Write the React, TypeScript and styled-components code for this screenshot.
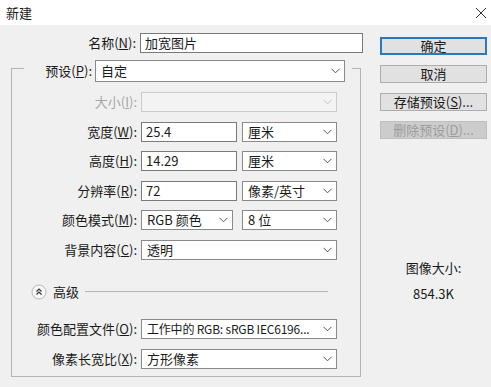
import React from "react"
import styled, { createGlobalStyle } from "styled-components"

const GlobalStyle = createGlobalStyle`
  html, body {
    margin: 0;
    padding: 0;
    background: #f0f0f0;
  }
  body {
    font-family: "Noto Sans CJK SC", "Microsoft YaHei", sans-serif;
    font-size: 13px;
    color: #1a1a1a;
  }
`

const Window = styled.div`
  width: 491px;
  height: 387px;
  background: #f0f0f0;
  display: flex;
  flex-direction: column;
  overflow: hidden;
`

const TitleBar = styled.div`
  height: 25px;
  flex: none;
  background: #fff;
  display: flex;
  align-items: center;
  justify-content: space-between;
  padding: 0 4px 0 6px;
  box-sizing: border-box;
  line-height: 25px;
`

const Body = styled.div`
  display: flex;
  flex: 1;
`

const Main = styled.div`
  width: 364px;
  display: flex;
  flex-direction: column;
  padding-top: 8px;
`

const Row = styled.div<{ $top?: number }>`
  display: flex;
  align-items: center;
  height: 20px;
  margin-top: ${({ $top }) => $top ?? 0}px;
`

const Label = styled.div<{ $w: number; $disabled?: boolean }>`
  width: ${({ $w }) => $w}px;
  margin-right: 4px;
  text-align: right;
  white-space: nowrap;
  line-height: 20px;
  color: ${({ $disabled }) => ($disabled ? "#a6a6a6" : "#1a1a1a")};
`

const Field = styled.div<{ $w: number }>`
  width: ${({ $w }) => $w}px;
  height: 20px;
  box-sizing: border-box;
  border: 1px solid #7a7a7a;
  background: #fff;
  padding: 0 4px;
  line-height: 18px;
  white-space: nowrap;
`

const Select = styled.div<{ $w: number; $h?: number; $disabled?: boolean; $gap?: number }>`
  width: ${({ $w }) => $w}px;
  height: ${({ $h }) => $h ?? 20}px;
  margin-left: ${({ $gap }) => $gap ?? 0}px;
  box-sizing: border-box;
  border: 1px solid ${({ $disabled }) => ($disabled ? "#cccccc" : "#8a8a8a")};
  background: ${({ $disabled }) => ($disabled ? "#f3f3f3" : "#fff")};
  display: flex;
  align-items: center;
  justify-content: space-between;
  gap: 4px;
  padding: 0 4px 0 5px;
  white-space: nowrap;
  overflow: hidden;
  color: #1a1a1a;
`

const SelectText = styled.span<{ $tight?: boolean }>`
  overflow: hidden;
  line-height: 18px;
  font-size: ${({ $tight }) => ($tight ? "12px" : "inherit")};
  letter-spacing: ${({ $tight }) => ($tight ? "-0.2px" : "normal")};
`

const Group = styled.fieldset`
  margin: 1px 0 0 11px;
  width: 350px;
  box-sizing: border-box;
  border: 1px solid #b4b4b4;
  padding: 10px 0 7px 0;
  min-width: 0;
`

const Legend = styled.legend`
  margin-left: 12px;
  padding: 6px 7px 0 0;
  display: flex;
  align-items: center;
`

const Advanced = styled.div`
  display: flex;
  align-items: center;
  height: 20px;
  margin: 22px 32px 0 19px;
`

const AdvancedText = styled.span`
  margin: 0 6px 0 6px;
  line-height: 20px;
`

const Rule = styled.div`
  flex: 1;
  height: 1px;
  background: #b4b4b4;
`

const Side = styled.div`
  width: 107px;
  margin-left: 16px;
  padding-top: 12px;
  display: flex;
  flex-direction: column;
`

const Button = styled.div<{ $primary?: boolean; $disabled?: boolean }>`
  height: 18px;
  box-sizing: border-box;
  margin-bottom: 10px;
  background: ${({ $disabled }) => ($disabled ? "#cccccc" : "#e1e1e1")};
  border: ${({ $primary, $disabled }) =>
    $primary ? "2px solid #2f78b8" : $disabled ? "1px solid #bfbfbf" : "1px solid #adadad"};
  color: ${({ $disabled }) => ($disabled ? "#9c9c9c" : "#1a1a1a")};
  display: flex;
  align-items: center;
  justify-content: center;
  line-height: 16px;
  white-space: nowrap;
`

const SizeInfo = styled.div`
  margin-top: 110px;
  display: flex;
  flex-direction: column;
  align-items: center;
  gap: 8px;
  line-height: 18px;
`

const Chevron: React.FC<{ muted?: boolean }> = ({ muted }) => (
  <svg width="9" height="6" viewBox="0 0 9 6" style={{ flex: "none" }}>
    <polyline points="0.5,0.8 4.5,4.8 8.5,0.8" fill="none" stroke={muted ? "#c4c4c4" : "#555"} strokeWidth="1" />
  </svg>
)

const CloseIcon = () => (
  <svg width="12" height="12" viewBox="0 0 12 12">
    <path d="M1 1 L11 11 M11 1 L1 11" stroke="#333" strokeWidth="1" />
  </svg>
)

const CollapseIcon = () => (
  <svg width="16" height="16" viewBox="0 0 16 16">
    <circle cx="8" cy="8" r="7" fill="#f7f7f7" stroke="#b8b8b8" />
    <polyline points="5.5,7.5 8,5 10.5,7.5" fill="none" stroke="#333" strokeWidth="1.2" />
    <polyline points="5.5,10.5 8,8 10.5,10.5" fill="none" stroke="#333" strokeWidth="1.2" />
  </svg>
)

const Key: React.FC<{ k: string }> = ({ k }) => (
  <>
    (<u>{k}</u>)
  </>
)

export default function App() {
  return (
    <Window>
      <GlobalStyle />
      <TitleBar>
        <span>新建</span>
        <CloseIcon />
      </TitleBar>
      <Body>
        <Main>
          <Row>
            <Label $w={136}>
              名称<Key k="N" />:
            </Label>
            <Field $w={223}>加宽图片</Field>
          </Row>

          <Group>
            <Legend>
              <Label $w={68} style={{ marginRight: 3 }}>
                预设<Key k="P" />:
              </Label>
              <Select $w={250} $h={22}>
                <SelectText>自定</SelectText>
                <Chevron />
              </Select>
            </Legend>

            <Row>
              <Label $w={125} $disabled>
                大小<Key k="I" />:
              </Label>
              <Select $w={196} $disabled>
                <SelectText />
                <Chevron muted />
              </Select>
            </Row>
            <Row $top={9.6}>
              <Label $w={125}>
                宽度<Key k="W" />:
              </Label>
              <Field $w={96}>25.4</Field>
              <Select $w={95} $gap={5}>
                <SelectText>厘米</SelectText>
                <Chevron />
              </Select>
            </Row>
            <Row $top={9.6}>
              <Label $w={125}>
                高度<Key k="H" />:
              </Label>
              <Field $w={96}>14.29</Field>
              <Select $w={95} $gap={5}>
                <SelectText>厘米</SelectText>
                <Chevron />
              </Select>
            </Row>
            <Row $top={9.6}>
              <Label $w={125}>
                分辨率<Key k="R" />:
              </Label>
              <Field $w={96}>72</Field>
              <Select $w={95} $gap={5}>
                <SelectText>像素/英寸</SelectText>
                <Chevron />
              </Select>
            </Row>
            <Row $top={9.6}>
              <Label $w={125}>
                颜色模式<Key k="M" />:
              </Label>
              <Select $w={92}>
                <SelectText>RGB 颜色</SelectText>
                <Chevron />
              </Select>
              <Select $w={95} $gap={9}>
                <SelectText>8 位</SelectText>
                <Chevron />
              </Select>
            </Row>
            <Row $top={9.6}>
              <Label $w={125}>
                背景内容<Key k="C" />:
              </Label>
              <Select $w={196}>
                <SelectText>透明</SelectText>
                <Chevron />
              </Select>
            </Row>

            <Advanced>
              <CollapseIcon />
              <AdvancedText>高级</AdvancedText>
              <Rule />
            </Advanced>

            <Row $top={17}>
              <Label $w={125}>
                颜色配置文件<Key k="O" />:
              </Label>
              <Select $w={196}>
                <SelectText $tight>工作中的 RGB: sRGB IEC6196...</SelectText>
                <Chevron />
              </Select>
            </Row>
            <Row $top={10}>
              <Label $w={125}>
                像素长宽比<Key k="X" />:
              </Label>
              <Select $w={196}>
                <SelectText>方形像素</SelectText>
                <Chevron />
              </Select>
            </Row>
          </Group>
        </Main>

        <Side>
          <Button $primary>确定</Button>
          <Button>取消</Button>
          <Button>
            存储预设<Key k="S" />...
          </Button>
          <Button $disabled>
            删除预设<Key k="D" />...
          </Button>
          <SizeInfo>
            <span>图像大小:</span>
            <span>854.3K</span>
          </SizeInfo>
        </Side>
      </Body>
    </Window>
  )
}
